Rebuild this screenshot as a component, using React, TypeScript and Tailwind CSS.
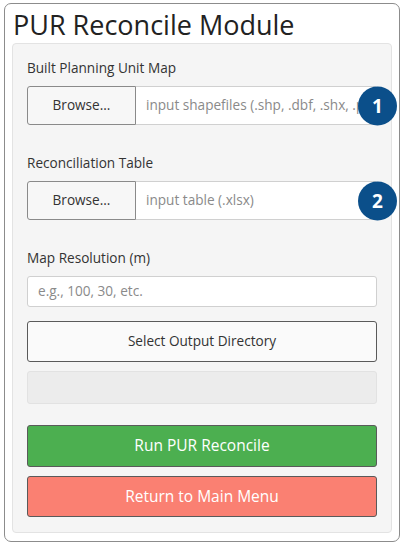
import React from "react";

function Badge({ n }: { n: string }) {
  return (
    <div className="absolute right-[-20px] top-1/2 -translate-y-1/2 w-[39px] h-[39px] rounded-full bg-[#0b4f8a] flex items-center justify-center text-white text-[19px] font-bold leading-none">
      {n}
    </div>
  );
}

function FileRow({ placeholder, n }: { placeholder: string; n: string }) {
  return (
    <div className="relative flex h-[39px] w-[350px]">
      <div className="w-[109px] h-full border border-[#8a8a8a] rounded-l-[3px] bg-[#f7f7f7] flex items-center justify-center text-[13.6px] text-[#333]">
        Browse...
      </div>
      <div className="flex-1 h-full border border-l-0 border-[#d0d0d0] bg-white rounded-r-[3px] flex items-center pl-[10px] text-[13.6px] text-[#8a8a8a] overflow-hidden whitespace-nowrap">
        {placeholder}
      </div>
      <Badge n={n} />
    </div>
  );
}

export default function App() {
  return (
    <div className="bg-white w-[405px] h-[545px] pt-[3px] pl-[4px]" style={{ fontFamily: '"Open Sans", "Noto Sans", sans-serif' }}>
      <div className="w-[396px] h-[539px] border border-[#8c8c8c] rounded-[7px] px-[7px] flex flex-col">
        <div className="h-[39px] flex items-center pl-[1px] text-[27px] leading-none text-[#222] pt-[2px]">
          PUR Reconcile Module
        </div>
        <div className="w-[380px] h-[490px] border border-[#e3e3e3] rounded-[4px] bg-[#f5f5f5] px-[14px] pt-[14px] flex flex-col">
          <div className="text-[13.6px] leading-[20px] text-[#333] h-[28px]">Built Planning Unit Map</div>
          <FileRow placeholder="input shapefiles (.shp, .dbf, .shx, .prj)" n="1" />
          <div className="text-[13.6px] leading-[20px] text-[#333] mt-[28px] h-[28px]">Reconciliation Table</div>
          <FileRow placeholder="input table (.xlsx)" n="2" />
          <div className="text-[13.6px] leading-[20px] text-[#333] mt-[28px] h-[28px]">Map Resolution (m)</div>
          <div className="w-[350px] h-[31px] border border-[#d0d0d0] rounded-[3px] bg-white flex items-center pl-[10px] text-[13.6px] text-[#8a8a8a]">
            e.g., 100, 30, etc.
          </div>
          <div className="mt-[14px] w-[350px] h-[41px] border border-[#5a5a5a] rounded-[3px] bg-[#fafafa] flex items-center justify-center text-[13.6px] text-[#333]">
            Select Output Directory
          </div>
          <div className="mt-[9px] w-[350px] h-[33px] border border-[#e2e2e2] rounded-[3px] bg-[#ececec]" />
          <div className="mt-[21px] w-[350px] h-[42px] border border-[#5a5a5a] rounded-[3px] bg-[#4caf50] flex items-center justify-center text-[15.5px] font-medium text-white">
            Run PUR Reconcile
          </div>
          <div className="mt-[9px] w-[350px] h-[41px] border border-[#5a5a5a] rounded-[3px] bg-[#fa8072] flex items-center justify-center text-[15.5px] font-medium text-white">
            Return to Main Menu
          </div>
        </div>
      </div>
    </div>
  );
}
